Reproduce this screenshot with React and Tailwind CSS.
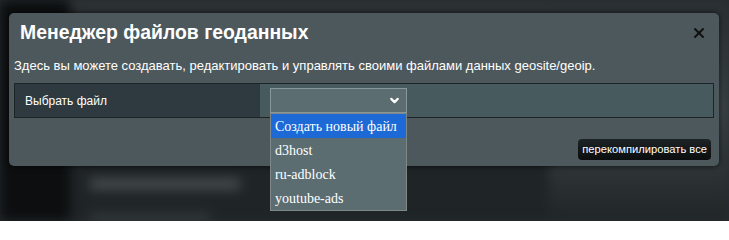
import { ChevronDown, X } from "lucide-react";

const options = ["Создать новый файл", "d3host", "ru-adblock", "youtube-ads"];

export default function App() {
  return (
    <div className="relative w-[729px] h-[221px] overflow-hidden bg-[#262c2f] font-['Liberation_Sans',Arial,sans-serif]">
      {/* blurred page behind the modal */}
      <div className="flex h-full blur-[6px]">
        <div className="w-[70px] h-full bg-[#0c0e0f]" />
        <div className="flex-1 flex flex-col">
          <div className="h-[40px] bg-[#2d3235]" />
          <div className="flex-1 bg-[#1f2426] flex flex-col gap-6 pt-[140px] pl-[20px]">
            <div className="w-[150px] h-[10px] bg-[#4a4f52]" />
            <div className="w-[120px] h-[8px] bg-[#34393b]" />
          </div>
        </div>
        <div className="w-[180px] h-full bg-gradient-to-b from-[#2a3033] via-[#3f4649] to-[#202527]" />
      </div>

      {/* modal */}
      <div className="absolute left-[9px] top-[13px] w-[710px] h-[153px] rounded-[5px] bg-[#4d585c] shadow-[0_0_6px_rgba(0,0,0,0.7)]">
        <div className="flex items-center justify-between pl-[11px] pr-[12px] pt-[2px] h-[38px]">
          <h2 className="text-[19.4px] font-bold text-white">Менеджер файлов геоданных</h2>
          <X size={16} strokeWidth={3} className="text-[#111]" />
        </div>
        <p className="px-[5px] mt-[7px] text-[13px] text-white leading-[16px]">
          Здесь вы можете создавать, редактировать и управлять своими файлами данных geosite/geoip.
        </p>
        <div className="mx-[5px] mt-[9px] flex h-[35px] border border-[#1e2326]">
          <div className="w-[245px] bg-[#2e3a3f] flex items-center pl-[10px] text-[12px] text-white">
            Выбрать файл
          </div>
          <div className="flex-1 bg-[#475a5e] flex items-center pl-[10px]">
            <div className="w-[137px] h-[25px] border border-[#8a9799] bg-[#5b6d71] flex items-center justify-end pr-[5px]">
              <ChevronDown size={13} strokeWidth={4} className="text-white" />
            </div>
          </div>
        </div>
        <div className="flex justify-end pr-[8px] mt-[21px]">
          <button className="h-[21px] px-[4px] rounded-[4px] bg-gradient-to-b from-[#1d2326] to-[#0b0d0e] text-[11.2px] text-white leading-none">
            перекомпилировать все
          </button>
        </div>
      </div>

      {/* open dropdown list */}
      <ul className="absolute left-[270px] top-[113px] w-[137px] border border-[#7f8789] bg-[#5b6d71] font-['Liberation_Serif','Times_New_Roman',serif] text-[14px] text-white">
        {options.map((o, i) => (
          <li
            key={o}
            className={`h-[24px] flex items-center pl-[4px] ${i === 0 ? "bg-[#1d6ad6]" : ""}`}
          >
            {o}
          </li>
        ))}
      </ul>
    </div>
  );
}
